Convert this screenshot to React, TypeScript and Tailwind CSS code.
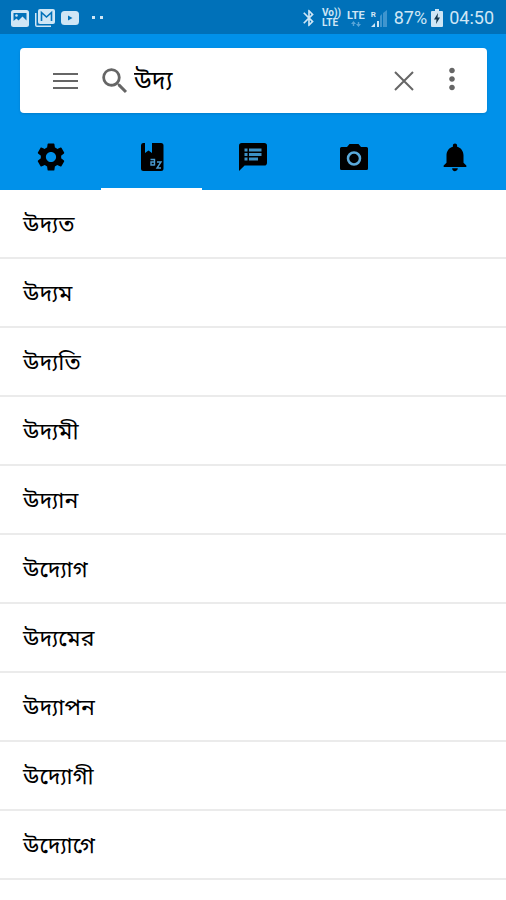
import { useState } from 'react';
import type { ReactNode } from 'react';
import { MdBluetooth, MdMoreVert, MdNotifications, MdSearch, MdSettings } from 'react-icons/md';

const words = [
  'উদ্যত',
  'উদ্যম',
  'উদ্যতি',
  'উদ্যমী',
  'উদ্যান',
  'উদ্যোগ',
  'উদ্যমের',
  'উদ্যাপন',
  'উদ্যোগী',
  'উদ্যোগে',
];

function DictionaryIcon() {
  return (
    <svg viewBox="0 0 24 28" className="w-6 h-7">
      <path
        fillRule="evenodd"
        d="M3 0h2v10l3.500-2.500L12 10V0h9a2.500 2.500 0 0 1 2.500 2.500v23A2.500 2.500 0 0 1 21 28H3.500A2.500 2.500 0 0 1 1 25.500v-23A2.500 2.500 0 0 1 3 0z"
      />
      <g fill="none" stroke="#4a9bd0" strokeWidth="1.400">
        <path d="M10.500 16.500h4v6M14.500 19h-3.500v3h3.500" />
        <path d="M17 19h4l-4 6h4" />
      </g>
    </svg>
  );
}

function NotesIcon() {
  return (
    <svg viewBox="0 0 28 28" className="size-7">
      <path d="M2.800 0h22.400A2.800 2.800 0 0 1 28 2.800v17a2.800 2.800 0 0 1-2.800 2.800H5.600L0 28V2.800A2.800 2.800 0 0 1 2.800 0z" />
      <path
        fill="none"
        stroke="#3c91c6"
        strokeWidth="3"
        d="M5.500 7h3M5.500 11.500h3M5.500 16h3M10 7h12.500M10 11.500h12.500M10 16h9"
      />
    </svg>
  );
}

function CameraIcon() {
  return (
    <svg viewBox="0 0 28 26" className="w-7 h-[26px]">
      <path d="M9.500 0h9l2.500 3h5.500A1.500 1.500 0 0 1 28 4.500v20a1.500 1.500 0 0 1-1.500 1.500h-25A1.500 1.500 0 0 1 0 24.500v-20A1.500 1.500 0 0 1 1.500 3H7z" />
      <circle cx="14" cy="14.500" r="6" fill="none" stroke="#5aa9da" strokeWidth="2.500" />
    </svg>
  );
}

const tabs: { label: string; icon: ReactNode }[] = [
  { label: 'Settings', icon: <MdSettings className="size-[34px]" /> },
  { label: 'Dictionary', icon: <DictionaryIcon /> },
  { label: 'Notes', icon: <NotesIcon /> },
  { label: 'Camera', icon: <CameraIcon /> },
  { label: 'Notifications', icon: <MdNotifications className="size-[34px]" /> },
];

function StatusBar() {
  return (
    <div className="flex h-[34px] items-center justify-between bg-[#0071b9] pl-[11px] pr-3 pt-0.5 text-[#cfe6f5]">
      <div className="flex items-center gap-[6px]">
        <svg viewBox="0 0 18 17" className="w-[18px] h-[17px]" fill="currentColor">
          <rect width="18" height="17" rx="2.500" />
          <path fill="#0071b9" d="M2.500 3h13v7.500l-4-4-4 4-2-2-3 2.500z" />
          <circle cx="5.500" cy="5.500" r="1.300" />
        </svg>
        <svg viewBox="0 0 20 18" className="w-5 h-[18px]" fill="currentColor">
          <path d="M0 4h1.500v12.500H16V18H2a2 2 0 0 1-2-2z" />
          <rect x="3" width="17" height="15" rx="2" />
          <path fill="none" stroke="#0071b9" strokeWidth="1.600" d="M6.500 12V3.500l5 4.500 5-4.500V12" />
        </svg>
        <svg viewBox="0 0 18 14" className="w-[18px] h-[14px]" fill="currentColor">
          <rect width="18" height="14" rx="3.500" />
          <path fill="#0071b9" d="M7 4.500v5l4.500-2.500z" />
        </svg>
        <svg viewBox="0 0 12 4" className="ml-[7px] w-3 h-1" fill="currentColor">
          <rect x="0" width="3" height="3" />
          <rect x="8" width="3" height="3" />
        </svg>
      </div>
      <div className="flex items-center">
        <MdBluetooth className="size-5" />
        <div className="ml-[3px] flex flex-col text-[10px] leading-[10px] font-bold">
          <span>Vo))</span>
          <span>LTE</span>
        </div>
        <div className="ml-1.5 flex flex-col items-center text-[11px] leading-[11px] font-bold">
          <span>LTE</span>
          <svg viewBox="0 0 10 6" className="w-[10px] h-[6px]" fill="#58a5d8">
            <path d="M2.500 0L5 3H3.200v2H1.800V3H0zM7.500 6L5 3h1.800V1h1.400v2H10z" />
          </svg>
        </div>
        <div className="ml-1.5 flex items-end">
          <div className="flex flex-col text-[8px] leading-[9px] font-bold">
            <span>R</span>
            <svg viewBox="0 0 9 8" className="w-[9px] h-2" fill="currentColor">
              <path d="M0 8l4-4v4zM6 2h2v6H6z" />
            </svg>
          </div>
          <svg viewBox="0 0 7 17" className="w-[7px] h-[17px]" fill="#3f95ce">
            <path d="M0 6l2-2v13H0zM3 3l4-3v17H3z" />
          </svg>
        </div>
        <span className="ml-[7px] text-[18px] leading-5">87%</span>
        <svg viewBox="0 0 12 18" className="ml-1 w-3 h-[18px]" fill="currentColor">
          <path d="M4 0h4v2h3a1 1 0 0 1 1 1v14a1 1 0 0 1-1 1H1a1 1 0 0 1-1-1V3a1 1 0 0 1 1-1h3z" />
          <path fill="#12364d" d="M7 4L3 10.500h2.500L5 15l4-6.500H6.500z" />
        </svg>
        <span className="ml-1.5 text-[18px] leading-5">04:50</span>
      </div>
    </div>
  );
}

export default function App() {
  const [query, setQuery] = useState('উদ্য');
  const [activeTab, setActiveTab] = useState(1);

  return (
    <div className="min-h-screen bg-white text-black font-[Roboto,'Noto_Sans_Bengali','Noto_Sans',sans-serif]">
      <StatusBar />

      <header className="bg-[#0091ea] pt-[14px]">
        <div className="ml-5 mr-[19px] flex h-[65px] items-center rounded bg-white pl-[33px] pr-[18px] text-[#666] shadow-sm">
          <button aria-label="Menu">
            <svg viewBox="0 0 25 18" className="w-[25px] h-[18px]" stroke="currentColor" strokeWidth="2">
              <path d="M0 2h25M0 9h25M0 16h25" />
            </svg>
          </button>
          <label htmlFor="search" aria-label="Search" className="ml-5">
            <MdSearch className="size-[34px]" />
          </label>
          <input
            id="search"
            type="text"
            value={query}
            onChange={(e) => setQuery(e.target.value)}
            className="ml-0.5 min-w-0 flex-1 text-[25px] leading-8 text-black outline-none"
          />
          <button aria-label="Clear" onClick={() => setQuery('')}>
            <svg viewBox="0 0 20 20" className="size-5" stroke="currentColor" strokeWidth="2">
              <path d="M1 1l18 18M19 1L1 19" />
            </svg>
          </button>
          <button aria-label="More options" className="ml-[21px] pb-1">
            <MdMoreVert className="size-[34px]" />
          </button>
        </div>

        <nav role="tablist" className="flex h-[77px] pt-3">
          {tabs.map((tab, i) => (
            <button
              key={tab.label}
              role="tab"
              aria-label={tab.label}
              aria-selected={activeTab === i}
              onClick={() => setActiveTab(i)}
              className={`flex flex-1 items-center justify-center border-b-2 ${
                activeTab === i ? 'border-white' : 'border-transparent'
              }`}
            >
              {tab.icon}
            </button>
          ))}
        </nav>
      </header>

      <ul>
        {words.map((word) => (
          <li key={word} className="border-b-2 border-[#ebebeb]">
            <button className="flex h-[67px] w-full items-center px-[23px] pt-0.5 text-[23px] leading-8">{word}</button>
          </li>
        ))}
      </ul>
    </div>
  );
}
